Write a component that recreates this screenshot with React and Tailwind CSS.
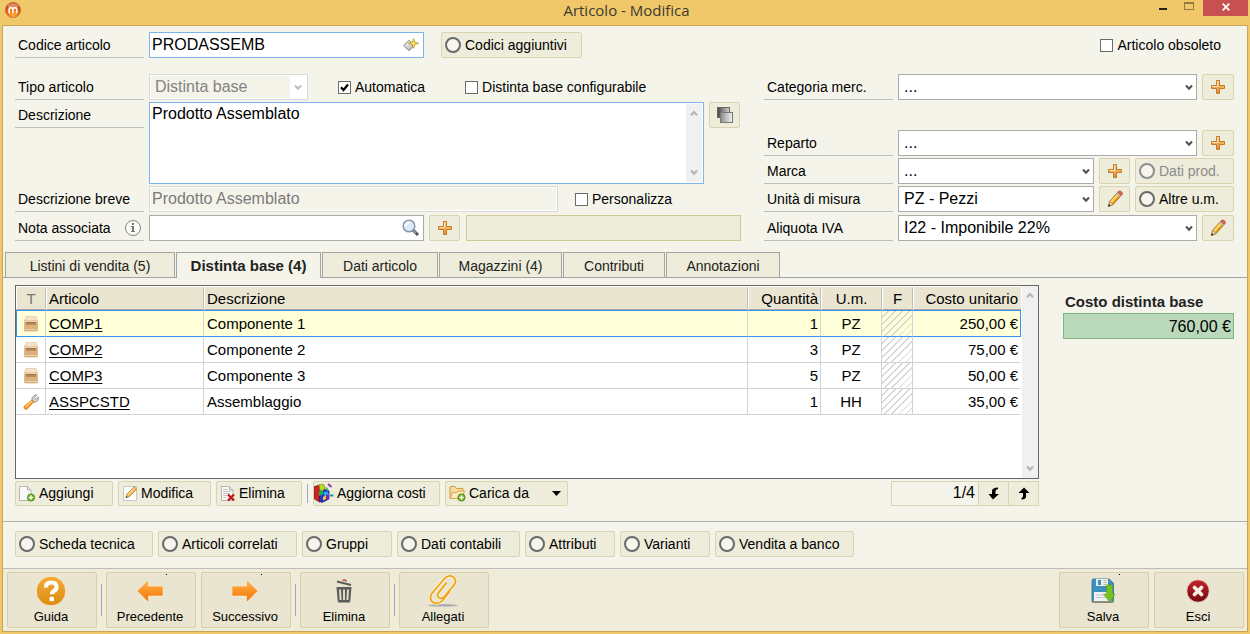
import React from "react";

const btn = "rounded-xs border border-[#d9d4ae] bg-[#eeecda]";

/* ---------- icons ---------- */

const PlusIcon = () => (
  <svg width="16" height="16" viewBox="0 0 16 16">
    <defs>
      <linearGradient id="plusFill" x1="0" y1="0" x2="0" y2="1">
        <stop offset="0" stopColor="#fbd08c" />
        <stop offset="0.5" stopColor="#f3b15e" />
        <stop offset="1" stopColor="#dd8a2c" />
      </linearGradient>
    </defs>
    <path d="M6.500 1.500h3v5h5v3h-5v5h-3v-5h-5v-3h5z" fill="url(#plusFill)" stroke="#c07a28" strokeLinejoin="round" />
    <path d="M7.500 2.500v5h-5" fill="none" stroke="#fde2b4" />
  </svg>
);

const PencilIcon = () => (
  <svg width="18" height="18" viewBox="0 0 18 18">
    <path d="M3.500 11.500 11.200 2.700l3.600 3.200-7.700 8.700-4.400 1.700z" fill="#f7b52a" stroke="#a06a1c" strokeWidth="0.800" />
    <path d="M5 12.200 12.200 4" stroke="#ffe08a" strokeWidth="1.300" />
    <path d="M6.600 13.800 13.800 5.600" stroke="#d18612" strokeWidth="1" />
    <path d="M11.200 2.700 12.800 1.200q1.200-.7 2.600.5t.8 2.600l-1.400 1.600z" fill="#e2604a" stroke="#a33f31" strokeWidth="0.700" />
    <path d="m10.400 3.600 3.600 3.200.9-1-3.600-3.200z" fill="#cfd5da" stroke="#7e868c" strokeWidth="0.500" />
    <path d="m3.500 11.500 3.600 3.100-4.800 1.900z" fill="#f4dcb2" stroke="#8c6a3c" strokeWidth="0.600" />
    <path d="m2 16.700 1-2.700 1.700 1.600z" fill="#222" />
  </svg>
);

const Ring = ({ light }) => (
  <svg width="16" height="16" viewBox="0 0 16 16" className="shrink-0">
    <circle cx="8" cy="8" r="7" fill="#f7f6ee" stroke={light ? "#8d8d8d" : "#6a6a6a"} strokeWidth="2" />
  </svg>
);

const Chevron = ({ color = "#505050", up }) => (
  <svg width="8" height="7" viewBox="0 0 8 7">
    <path d={up ? "M1 5.200 4 2l3 3.200" : "M1 1.500 4 4.700 7 1.500"} fill="none" stroke={color} strokeWidth="2" />
  </svg>
);

const LogoIcon = () => (
  <svg width="16" height="16" viewBox="0 0 16 16">
    <defs>
      <radialGradient id="logo" cx="0.5" cy="0.85" r="0.8">
        <stop offset="0" stopColor="#ffb43c" />
        <stop offset="0.5" stopColor="#f06a12" />
        <stop offset="1" stopColor="#b83a06" />
      </radialGradient>
    </defs>
    <circle cx="8" cy="8" r="7.600" fill="url(#logo)" stroke="#c4581c" strokeWidth="0.600" />
    <ellipse cx="8" cy="4" rx="5.500" ry="3" fill="#fff" opacity="0.350" />
    <path d="M4.200 11.200V7.600q0-1.800 1.800-1.800t1.900 1.800v3.600V7.600q0-1.800 1.900-1.800t1.900 1.800v3.600" fill="none" stroke="#fff" strokeWidth="1.600" />
  </svg>
);

const DiamondStarIcon = () => (
  <svg width="16" height="14" viewBox="0 0 16 14">
    <defs>
      <linearGradient id="dia" x1="0" y1="0" x2="1" y2="1">
        <stop offset="0" stopColor="#fff" />
        <stop offset="1" stopColor="#a9a9a9" />
      </linearGradient>
    </defs>
    <path d="M.8 7.500 6 2.300l5.200 5.200L6 12.700z" fill="url(#dia)" stroke="#7d7d7d" />
    <path d="M10.500.5l1.200 3.600 3.800 1.200-3.800 1.300-1.200 3.700-1.300-3.700-3.700-1.300 3.700-1.200z" fill="#f7e463" stroke="#b89f24" strokeWidth="0.900" />
  </svg>
);

const LensIcon = () => (
  <svg width="18" height="18" viewBox="0 0 18 18">
    <path d="m11 11 5 5" stroke="#55565a" strokeWidth="3" />
    <path d="m11 11 3 3" stroke="#a4a7ad" strokeWidth="1.200" />
    <circle cx="7" cy="7" r="5.800" fill="#dbe9fb" stroke="#8b97ac" strokeWidth="1.500" />
    <path d="M3.500 7q.5-3.500 4-3.600" fill="none" stroke="#fff" strokeWidth="2" />
  </svg>
);

const InfoIcon = () => (
  <svg width="18" height="18" viewBox="0 0 18 18">
    <circle cx="9" cy="9" r="7.500" fill="#fbfaf4" stroke="#858585" />
    <path d="M8 4h2v2H8zM7 7h3v5h1v1H7v-1h1V8H7z" fill="#777" />
  </svg>
);

const CopyIcon = () => (
  <svg width="16" height="16" viewBox="0 0 16 16">
    <defs>
      <linearGradient id="copyA"><stop offset="0" stopColor="#444" /><stop offset="1" stopColor="#d5d5d5" /></linearGradient>
      <linearGradient id="copyB"><stop offset="0" stopColor="#8b8b8b" /><stop offset="1" stopColor="#f4f4f4" /></linearGradient>
    </defs>
    <rect x=".5" y=".5" width="12" height="10" fill="url(#copyA)" stroke="#666" />
    <rect x="3.500" y="5.500" width="12" height="10" fill="url(#copyB)" stroke="#777" />
  </svg>
);

const BoxIcon = () => (
  <svg width="16" height="16" viewBox="0 0 16 16" className="mx-auto block">
    <path d="M3 .5h10L14.500 5h-13z" fill="#f4e3ca" stroke="#dcc09a" strokeWidth="0.600" />
    <path d="M1.500 5h13v9.500q0 .5-.5.500H2q-.5 0-.5-.5z" fill="#dbb07c" stroke="#cfa676" strokeWidth="0.600" />
    <path d="M1.500 5h13v1h-13z" fill="#efd6b0" />
    <path d="M3 6h10v3H3z" fill="#b98a58" />
    <path d="M3 6h10v1H3z" fill="#a2733f" />
    <path d="M2 13.500h12" stroke="#edd2ac" />
  </svg>
);

const WrenchIcon = () => (
  <svg width="16" height="16" viewBox="0 0 16 16" className="mx-auto block">
    <path d="M9 7.200q-1-3.800 2-5.700 1.600-.9 3-.4L11.500 3.500l.8 1.500 1.200.1 1.900-2.300q.5 2.900-1.300 4.500-1.400 1.100-3.300.8z" fill="#d9d9d9" stroke="#858585" strokeWidth="0.800" />
    <path d="m9.300 5.800 1.700 1.700-6.400 7.200q-1.500 1.200-2.900 0t-.2-2.800z" fill="#f89c2c" stroke="#d2741a" strokeWidth="0.800" />
    <path d="m3 12.300 5.700-5" stroke="#ffd08c" strokeWidth="1.200" />
  </svg>
);

const Page = () => (
  <>
    <path d="M1.500 1.500h8l3.500 3.500v10.500h-11.500z" fill="#fafafa" stroke="#b5b5b5" />
    <path d="M9.500 1.500v3.500h3.500" fill="#e2e2e2" stroke="#b5b5b5" />
  </>
);

const GreenPlus = ({ x, y }) => (
  <g transform={`translate(${x} ${y})`}>
    <circle r="3.600" fill="#6cb21f" stroke="#44810c" strokeWidth="0.800" />
    <path d="M0-2.200V2.200M-2.200 0H2.200" stroke="#fff" strokeWidth="1.300" />
  </g>
);

const AddPageIcon = () => (
  <svg width="18" height="17" viewBox="0 0 18 17"><Page /><GreenPlus x={13} y={12.5} /></svg>
);

const EditPageIcon = () => (
  <svg width="16" height="17" viewBox="0 0 16 17">
    <path d="M1.500 1.500h13v14h-13z" fill="#fcfcfc" stroke="#c9c9c9" />
    <path d="m4 12.500 1-3.500 7.200-7.300 2.500 2.400-7.200 7.400z" fill="#f6bf55" stroke="#b07a26" strokeWidth="0.800" />
    <path d="m5.800 9.800 6.500-6.500" stroke="#ffe7a8" />
    <path d="m3.600 13 .8-2 1.300 1.200z" fill="#444" />
  </svg>
);

const DeletePageIcon = () => (
  <svg width="16" height="17" viewBox="0 0 16 17">
    <Page />
    <path d="M3 4.500h5M3 6.500h8M3 8.500h7M3 10.500h4M3 12.500h3" stroke="#c4c4c4" />
    <path d="m8 9.500 6 6m0-6-6 6" stroke="#c81414" strokeWidth="2.200" />
  </svg>
);

const CubesIcon = () => (
  <svg width="20" height="20" viewBox="0 0 20 20">
    <path d="M.5 3.500 6 2l2 3v13l-2.500 1L.5 16z" fill="#d81c1c" stroke="#5e0b0b" strokeWidth="0.700" />
    <path d="M5.500 7.500 10 6l5 2v8l-7 3.500-2.500-1.500z" fill="#2a33d4" stroke="#141466" strokeWidth="0.700" />
    <path d="m5 2 4-1 2 2-1 4-4 1z" fill="#b8dc22" stroke="#5a7010" strokeWidth="0.500" />
    <path d="m5 8 4-1v4.500L5 13z" fill="#19b43a" />
    <path d="m9.500 9.500 3-1 2 1.500v3l-3.500 1z" fill="#23b7e8" />
    <path d="m9 14 3-1.500v3.500l-3 1.500z" fill="#e6d32a" />
    <path d="m12 11.500 3 .5v4l-3 1.500z" fill="#8820a8" />
    <path d="m14 1 3.500 3" stroke="#8b35b5" strokeWidth="2" />
    <path d="m12 4.500 2 3" stroke="#39b56a" strokeWidth="1.600" />
    <path d="M16 12.500h3.500" stroke="#1d9bab" strokeWidth="2" />
  </svg>
);

const FolderIcon = () => (
  <svg width="17" height="17" viewBox="0 0 17 17">
    <path d="M1 13.500V2.200q0-.7.7-.7H6l1.500 2h6q.5 0 .5.500v9.500z" fill="#f9dc9c" stroke="#d09a3d" />
    <path d="M1.200 13.500 3.500 7.500H8l1-1.500h6.500l-2.500 7.500z" fill="#fdebbf" stroke="#d9a448" />
    <GreenPlus x={12.5} y={12.5} />
  </svg>
);

const BentArrow = ({ up }) => (
  <svg width="12" height="13" viewBox="0 0 12 13">
    {up ? (
      <path d="M6 .5 11.500 6H8v4q-.5 2.500-4.500 2.500V11Q5 10.500 5 9V6H.5z" fill="#000" />
    ) : (
      <path d="M5 12.500.5 7H4V3.500Q4.500.8 10 .5V2Q7.500 2.500 7.500 4v3H11z" fill="#000" />
    )}
  </svg>
);

const HelpIcon = () => (
  <svg width="32" height="32" viewBox="0 0 32 32">
    <defs>
      <linearGradient id="help" x1="0" y1="0" x2="0" y2="1">
        <stop offset="0" stopColor="#f2ac3c" /><stop offset="1" stopColor="#dd8a10" />
      </linearGradient>
    </defs>
    <circle cx="16" cy="16" r="14.800" fill="url(#help)" stroke="#fbf3df" strokeWidth="0.800" />
    <path d="M10.800 12.500q.2-5 5.400-5t5.300 4.400q0 2.600-2.600 4.100-2 1.200-2 3.200" fill="none" stroke="#fff" strokeWidth="4.200" />
    <rect x="14.500" y="21.800" width="4.500" height="4.400" rx="1" fill="#fff" />
  </svg>
);

const BigArrow = ({ right }) => (
  <svg width="28" height="24" viewBox="0 0 28 24">
    <defs>
      <linearGradient id="arrow" x1="0" y1="0" x2="0" y2="1">
        <stop offset="0" stopColor="#ffb65c" /><stop offset="0.500" stopColor="#fb9224" /><stop offset="1" stopColor="#ef7208" />
      </linearGradient>
    </defs>
    <path
      d="M1 12 12.500.8v6.200h14.500v10H12.500v6.200z"
      transform={right ? "translate(28 0) scale(-1 1)" : undefined}
      fill="url(#arrow)" stroke="#fdf0dc" strokeWidth="0.600"
    />
  </svg>
);

const TrashIcon = () => (
  <svg width="18" height="24" viewBox="0 0 18 24">
    <path d="m2 2.500 14 3.500" stroke="#5c5c5c" strokeWidth="2.200" />
    <path d="M7.500 1.500q2.500-1.500 4 1" fill="none" stroke="#c0424a" strokeWidth="1.400" />
    <path d="M1.500 8h15l-1.200 14q-.1 1.500-1.600 1.500H4.300q-1.500 0-1.600-1.500z" fill="#5c5c5c" />
    <path d="m5 10.500.6 10.500M9 10.500v10.500M13 10.500l-.6 10.500" stroke="#e9e5d2" strokeWidth="1.800" />
  </svg>
);

const ClipIcon = () => (
  <svg width="32" height="32" viewBox="0 0 32 32">
    <ellipse cx="16" cy="30.300" rx="15" ry="1.300" fill="#a9abad" />
    <path d="M22.500 16.500 15.500 25.500q-4.500 4.800-9.500 1.800-4.500-3.600-1.200-8.800L17.500 3.500q4.500-4.200 8.800-1.500 4 3.200 1 7.600l-9.800 12q-3 3-5.700 1-2.400-2-.2-5l8-10" fill="none" stroke="#fff3cf" strokeWidth="3.400" />
    <path d="M22.500 16.500 15.500 25.500q-4.500 4.800-9.500 1.800-4.500-3.600-1.200-8.800L17.500 3.500q4.500-4.200 8.800-1.500 4 3.200 1 7.600l-9.800 12q-3 3-5.700 1-2.400-2-.2-5l8-10" fill="none" stroke="#efa31d" strokeWidth="1.800" />
  </svg>
);

const SaveIcon = () => (
  <svg width="24" height="26" viewBox="0 0 24 26">
    <path d="M1 2.500Q1 1 2.500 1H18l4.500 4v18q0 1.500-1.500 1.500H2.500Q1 24.500 1 23z" fill="#3d8fbf" stroke="#2b6f98" strokeWidth="0.800" />
    <rect x="5" y="1" width="12" height="7" fill="#e9eef0" />
    <rect x="7" y="2" width="3" height="5" fill="#3d8fbf" />
    <path d="M12.500 2.500h3M12.500 4.500h3M12.500 6.500h3" stroke="#c8b98c" />
    <rect x="3" y="14" width="17" height="9" fill="#f2f2f4" />
    <path d="M4.500 17h12M4.500 19.500h12" stroke="#c2c4cc" />
    <path d="M2 24h20" stroke="#d9973c" />
    <path d="M15.500 7h6v9h3L18.500 24l-6-8h3z" fill="#77c01e" stroke="#58a010" strokeWidth="0.500" />
  </svg>
);

const ExitIcon = () => (
  <svg width="24" height="24" viewBox="0 0 24 24">
    <defs>
      <linearGradient id="exit" x1="0" y1="0" x2="0" y2="1">
        <stop offset="0" stopColor="#c4242a" /><stop offset="1" stopColor="#760a10" />
      </linearGradient>
    </defs>
    <circle cx="12" cy="12" r="11.200" fill="url(#exit)" stroke="#f3e6da" strokeWidth="0.700" />
    <path d="m8.500 8.500 7 7m0-7-7 7" stroke="#f6efe4" strokeWidth="3.800" strokeLinecap="round" />
  </svg>
);

/* ---------- controls ---------- */

const Label = ({ htmlFor, children, extra }) => (
  <div className="mr-[5px] flex h-[26px] w-[129px] shrink-0 items-center justify-between border-b border-[#bdbdbd] pr-0.5 pl-[3px]">
    <label htmlFor={htmlFor} className="whitespace-nowrap">{children}</label>
    {extra}
  </div>
);

const Check = ({ children, checked }) => (
  <label className="flex items-center gap-1 whitespace-nowrap">
    <span className="grid size-[13px]">
      <input
        type="checkbox"
        defaultChecked={checked}
        className="peer col-start-1 row-start-1 size-[13px] appearance-none border border-[#6b6b6b] bg-white"
      />
      <svg viewBox="0 0 13 13" className="pointer-events-none col-start-1 row-start-1 hidden size-[13px] peer-checked:block">
        <path d="M3 6.200 5.500 9 10 3.500" fill="none" stroke="#000" strokeWidth="2.200" />
      </svg>
    </span>
    {children}
  </label>
);

const Select = ({ id, value, className }) => (
  <div className={"grid h-[26px] items-center " + className}>
    <select
      id={id}
      className="col-start-1 row-start-1 h-[26px] w-full appearance-none border border-[#ababab] bg-white pr-5 pl-[5px] text-base leading-6"
    >
      <option>{value}</option>
    </select>
    <span className="pointer-events-none col-start-1 row-start-1 mr-1 justify-self-end"><Chevron /></span>
  </div>
);

const IconButton = ({ label, children, className = "w-[31px]" }) => (
  <button type="button" aria-label={label} className={`${btn} flex h-[26px] shrink-0 items-center justify-center ${className}`}>
    {children}
  </button>
);

const RingButton = ({ children, className, disabled }) => (
  <button
    type="button"
    disabled={disabled}
    className={`${btn} flex h-[26px] shrink-0 items-center gap-1 pl-[3px] whitespace-nowrap disabled:text-[#8c8c8c] ${className}`}
  >
    <Ring light={disabled} />
    {children}
  </button>
);

const ToolButton = ({ icon, children, className }) => (
  <button type="button" className={`${btn} flex h-[25px] shrink-0 items-center gap-[3px] pb-px whitespace-nowrap ${className}`}>
    {icon}
    {children}
  </button>
);

const BigButton = ({ icon, dot, children }) => (
  <button type="button" className="relative flex h-14 w-[90px] shrink-0 flex-col items-center rounded-xs border border-[#d6d0a4] bg-[#e9e5d0] pr-0.5 text-[13px]">
    {dot && <span className="absolute top-px left-[59px] size-px bg-black" />}
    <span className="flex h-[35px] items-center justify-center">{icon}</span>
    <span className="leading-[18px]">{children}</span>
  </button>
);

const Sep = ({ className }) => <span className={"w-px shrink-0 bg-[#a8a8a8] " + className} />;

const Tab = ({ active, children, className }) => (
  <button
    type="button"
    role="tab"
    aria-selected={!!active}
    className={
      "shrink-0 border border-b-0 border-[#a3a3a3] pt-0.5 whitespace-nowrap text-[#222] " +
      (active ? "-mb-px bg-[#f5f4eb] pb-px text-[15px] font-bold " : "bg-[#eeecda] ") +
      className
    }
  >
    {children}
  </button>
);

/* ---------- data ---------- */

const rows = [
  { icon: <BoxIcon />, code: "COMP1", desc: "Componente 1", qty: 1, um: "PZ", cost: "250,00 €" },
  { icon: <BoxIcon />, code: "COMP2", desc: "Componente 2", qty: 3, um: "PZ", cost: "75,00 €" },
  { icon: <BoxIcon />, code: "COMP3", desc: "Componente 3", qty: 5, um: "PZ", cost: "50,00 €" },
  { icon: <WrenchIcon />, code: "ASSPCSTD", desc: "Assemblaggio", qty: 1, um: "HH", cost: "35,00 €" },
];

const th = "border-r border-b border-l border-r-[#bdbdbd] border-b-[#a9a9a9] border-l-white pt-0.5 font-normal";
const td = "border-r border-b border-r-[#d2d2d2]";

const selectedRow =
  "h-[27px] bg-[#ffffd8] *:border-t *:border-t-[#3592ee] *:border-b-[#3592ee] *:first:border-l *:first:border-l-[#3592ee] *:last:border-r *:last:border-r-[#3592ee]";
const plainRow = "h-[26px] bg-white *:border-b-[#d2d2d2] *:last:border-r-white";

export default function App() {
  return (
    <div className="flex min-h-screen flex-col bg-[#f0c869] px-0.5 pb-0.5 font-['Liberation_Sans',Arial,sans-serif] text-sm text-black">
      <header className="flex h-[25px] shrink-0">
        <div className="flex flex-1 items-start pt-0.5 pl-[3px]"><LogoIcon /></div>
        <h1 className="font-['Open_Sans',sans-serif] text-[15px] leading-5 text-[#3a3a32]">Articolo - Modifica</h1>
        <div className="flex flex-1 justify-end">
          <button type="button" aria-label="Riduci a icona" className="flex h-4 w-6 justify-center pt-2">
            <span className="h-0.5 w-2 bg-[#222]" />
          </button>
          <button type="button" aria-label="Ingrandisci" className="flex h-4 w-7 justify-center pt-0.5">
            <span className="h-2 w-2.5 border border-t-2 border-[#947a42]" />
          </button>
          <button type="button" aria-label="Chiudi" className="flex h-4 w-[45px] items-center justify-center bg-[#c75050] pb-0.5">
            <svg width="8" height="8" viewBox="0 0 8 8"><path d="m.7.7 6.600 6.600m0-6.600L.7 7.300" stroke="#fff" strokeWidth="1.700" /></svg>
          </button>
        </div>
      </header>

      <main className="flex flex-1 flex-col border border-[#c9a655] bg-[#f5f4eb]">
        <form className="flex gap-4 pt-1.5 pr-[13px] pl-3">
          <div className="flex flex-1 flex-col">
            <div className="flex">
              <Label htmlFor="codice">Codice articolo</Label>
              <div className="flex h-[26px] w-[275px] items-center border border-[#7eb4ea] bg-white pr-1">
                <input id="codice" defaultValue="PRODASSEMB" className="min-w-0 flex-1 pl-0.5 text-base leading-6 outline-none" />
                <DiamondStarIcon />
              </div>
              <RingButton className="ml-[17px] w-[141px]">Codici aggiuntivi</RingButton>
            </div>
            <div className="mt-4 flex">
              <Label htmlFor="tipo">Tipo articolo</Label>
              <div className="mr-[30px] flex h-[26px] w-[159px] items-center border border-[#d9d9d9] bg-white p-px">
                <select id="tipo" disabled className="h-full flex-1 appearance-none bg-[#f5f4eb] pl-1 text-base leading-5 text-[#838383] opacity-100">
                  <option>Distinta base</option>
                </select>
                <span className="mx-1"><Chevron color="#bcbcbc" /></span>
              </div>
              <div className="flex gap-10">
                <Check checked>Automatica</Check>
                <Check>Distinta base configurabile</Check>
              </div>
            </div>
            <div className="mt-0.5 flex">
              <Label htmlFor="descrizione">Descrizione</Label>
              <div className="flex h-[82px] w-[555px] border border-[#7eb4ea] bg-white p-px">
                <textarea
                  id="descrizione"
                  defaultValue="Prodotto Assemblato"
                  className="flex-1 resize-none overflow-hidden pl-px text-base leading-5 outline-none"
                />
                <div className="flex w-4 flex-col items-center justify-between bg-[#f0f0f0] py-1.5">
                  <Chevron up color="#b5b5b5" />
                  <Chevron color="#b5b5b5" />
                </div>
              </div>
              <IconButton label="Copia descrizione" className="ml-[5px] w-[31px]"><CopyIcon /></IconButton>
            </div>
            <div className="mt-0.5 flex">
              <Label htmlFor="breve">Descrizione breve</Label>
              <div className="mr-[17px] h-[26px] w-[409px] border border-[#d9d9d9] bg-white p-px">
                <input id="breve" disabled defaultValue="Prodotto Assemblato" className="block h-full w-full bg-[#f5f4eb] pl-px text-base leading-5 text-[#7b7b7b]" />
              </div>
              <Check>Personalizza</Check>
            </div>
            <div className="mt-[3px] flex">
              <Label htmlFor="nota" extra={<InfoIcon />}>Nota associata</Label>
              <div className="mr-[5px] flex h-[26px] w-[275px] items-center border border-[#ababab] bg-white pr-[3px]">
                <input id="nota" className="min-w-0 flex-1 pl-0.5 text-base leading-6 outline-none" />
                <LensIcon />
              </div>
              <IconButton label="Aggiungi nota"><PlusIcon /></IconButton>
              <input readOnly aria-label="Testo della nota" className="ml-1.5 h-[26px] w-[275px] border border-[#cfca98] bg-[#eeecda]" />
            </div>
          </div>

          <div className="flex w-[470px] shrink-0 flex-col">
            <div className="flex h-[26px] justify-end pr-[13px]">
              <Check>Articolo obsoleto</Check>
            </div>
            <div className="mt-4 flex">
              <Label htmlFor="categoria">Categoria merc.</Label>
              <Select id="categoria" value="..." className="mr-[5px] flex-1" />
              <IconButton label="Aggiungi categoria" className="w-8"><PlusIcon /></IconButton>
            </div>
            <div className="mt-[30px] flex">
              <Label htmlFor="reparto">Reparto</Label>
              <Select id="reparto" value="..." className="mr-[5px] flex-1" />
              <IconButton label="Aggiungi reparto" className="w-8"><PlusIcon /></IconButton>
            </div>
            <div className="mt-0.5 flex">
              <Label htmlFor="marca">Marca</Label>
              <Select id="marca" value="..." className="mr-[5px] flex-1" />
              <IconButton label="Aggiungi marca"><PlusIcon /></IconButton>
              <RingButton disabled className="ml-[5px] w-[99px]">Dati prod.</RingButton>
            </div>
            <div className="mt-0.5 flex">
              <Label htmlFor="um">Unità di misura</Label>
              <Select id="um" value="PZ - Pezzi" className="mr-[5px] flex-1" />
              <IconButton label="Modifica unità"><PencilIcon /></IconButton>
              <RingButton className="ml-[5px] w-[99px]">Altre u.m.</RingButton>
            </div>
            <div className="mt-[3px] flex">
              <Label htmlFor="iva">Aliquota IVA</Label>
              <Select id="iva" value="I22 - Imponibile 22%" className="mr-[5px] flex-1" />
              <IconButton label="Modifica aliquota" className="w-8"><PencilIcon /></IconButton>
            </div>
          </div>
        </form>

        <div role="tablist" className="mt-[11px] flex h-[26px] shrink-0 gap-px border-b border-[#a3a3a3] pl-0.5">
          <Tab className="w-[170px]">Listini di vendita (5)</Tab>
          <Tab active className="w-[145px]">Distinta base (4)</Tab>
          <Tab className="w-[116px]">Dati articolo</Tab>
          <Tab className="w-[123px]">Magazzini (4)</Tab>
          <Tab className="w-[102px]">Contributi</Tab>
          <Tab className="w-[114px]">Annotazioni</Tab>
        </div>

        <section className="flex flex-1 gap-6 pt-[7px] pr-[13px] pl-3">
          <div className="flex flex-1 flex-col">
            <div className="flex min-h-48 flex-1 border border-[#666] bg-white">
              <div className="flex-1 pt-px pr-px">
                <table className="w-full table-fixed border-separate border-spacing-0 text-[15px] leading-5">
                  <colgroup>
                    <col className="w-[30px]" />
                    <col className="w-[158px]" />
                    <col />
                    <col className="w-[73px]" />
                    <col className="w-[61px]" />
                    <col className="w-[31px]" />
                    <col className="w-[108px]" />
                  </colgroup>
                  <thead>
                    <tr className="h-[23px] bg-[#e9e5d0]">
                      <th className={th + " text-[#777]"}>T</th>
                      <th className={th + " pl-0.5 text-left"}>Articolo</th>
                      <th className={th + " pl-0.5 text-left"}>Descrizione</th>
                      <th className={th + " pr-0.5 text-right"}>Quantità</th>
                      <th className={th}>U.m.</th>
                      <th className={th}>F</th>
                      <th className={th + " border-r-0 pr-[3px] text-right"}>Costo unitario</th>
                    </tr>
                  </thead>
                  <tbody>
                    {rows.map((r, i) => (
                      <tr key={r.code} className={i === 0 ? selectedRow : plainRow}>
                        <td className={td}>{r.icon}</td>
                        <td className={td + " pl-[3px]"}>
                          <a href={"#" + r.code} className="underline underline-offset-2">{r.code}</a>
                        </td>
                        <td className={td + " pl-[3px]"}>{r.desc}</td>
                        <td className={td + " pr-0.5 text-right"}>{r.qty}</td>
                        <td className={td + " text-center"}>{r.um}</td>
                        <td className={td + " bg-[repeating-linear-gradient(135deg,transparent_0_4px,#d6d6d6_4px_5px)]"} />
                        <td className={td + " pr-0.5 text-right"}>{r.cost}</td>
                      </tr>
                    ))}
                  </tbody>
                </table>
              </div>
              <div className="flex w-4 flex-col items-center justify-between bg-[#f0f0f0] py-1.5">
                <Chevron up color="#b5b5b5" />
                <Chevron color="#b5b5b5" />
              </div>
            </div>

            <div className="mt-0.5 flex gap-[5px]">
              <ToolButton icon={<AddPageIcon />} className="w-[98px] pl-0.5">Aggiungi</ToolButton>
              <ToolButton icon={<EditPageIcon />} className="w-[93px] pl-[3px]">Modifica</ToolButton>
              <ToolButton icon={<DeletePageIcon />} className="w-[86px] pl-[3px]">Elimina</ToolButton>
              <Sep className="my-[3px]" />
              <ToolButton icon={<CubesIcon />} className="w-[127px]">Aggiorna costi</ToolButton>
              <ToolButton icon={<FolderIcon />} className="w-[123px] pl-[3px]">
                Carica da
                <svg width="9" height="5" viewBox="0 0 9 5" className="mr-1.5 ml-auto"><path d="M0 0h9L4.500 5z" fill="#000" /></svg>
              </ToolButton>
              <div className="ml-auto flex h-[25px] w-[148px] border border-[#d9d4ae]">
                <output className="flex-1 pr-[3px] text-right text-base leading-[22px]">1/4</output>
                <button type="button" aria-label="Successivo" className="flex w-[30px] items-center justify-center border-l border-[#d9d4ae] bg-[#eeecda]"><BentArrow /></button>
                <button type="button" aria-label="Precedente" className="flex w-[30px] items-center justify-center border-l border-[#d9d4ae] bg-[#eeecda]"><BentArrow up /></button>
              </div>
            </div>
          </div>

          <div className="flex w-[171px] shrink-0 flex-col pt-1.5">
            <label htmlFor="costo" className="pl-0.5 text-[15px] leading-[22px] font-bold text-[#222]">Costo distinta base</label>
            <input
              id="costo"
              readOnly
              value="760,00 €"
              className="h-[26px] w-full border border-[#7fb87f] bg-[#bad9ba] pt-0.5 pr-0.5 text-right text-base leading-5"
            />
          </div>
        </section>

        <div className="mt-[15px] flex gap-[5px] border-t border-[#b0b0b0] px-3 pt-[9px] pb-[11px]">
          <RingButton className="w-[138px]">Scheda tecnica</RingButton>
          <RingButton className="w-[139px]">Articoli correlati</RingButton>
          <RingButton className="w-[90px]">Gruppi</RingButton>
          <RingButton className="w-[123px]">Dati contabili</RingButton>
          <RingButton className="w-[90px]">Attributi</RingButton>
          <RingButton className="w-[90px]">Varianti</RingButton>
          <RingButton className="w-[139px]">Vendita a banco</RingButton>
        </div>

        <footer className="flex gap-[5px] border-t border-[#bcbcbc] bg-[#efecdb] py-[3px] pr-[3px] pl-1">
          <BigButton icon={<HelpIcon />}>Guida</BigButton>
          <Sep className="-mx-px my-3" />
          <BigButton icon={<BigArrow />} dot>Precedente</BigButton>
          <BigButton icon={<BigArrow right />} dot>Successivo</BigButton>
          <Sep className="-mx-px my-3" />
          <BigButton icon={<TrashIcon />}>Elimina</BigButton>
          <Sep className="-mx-px my-3" />
          <BigButton icon={<ClipIcon />}>Allegati</BigButton>
          <div className="flex-1" />
          <BigButton icon={<SaveIcon />} dot>Salva</BigButton>
          <BigButton icon={<ExitIcon />}>Esci</BigButton>
        </footer>
      </main>
    </div>
  );
}
